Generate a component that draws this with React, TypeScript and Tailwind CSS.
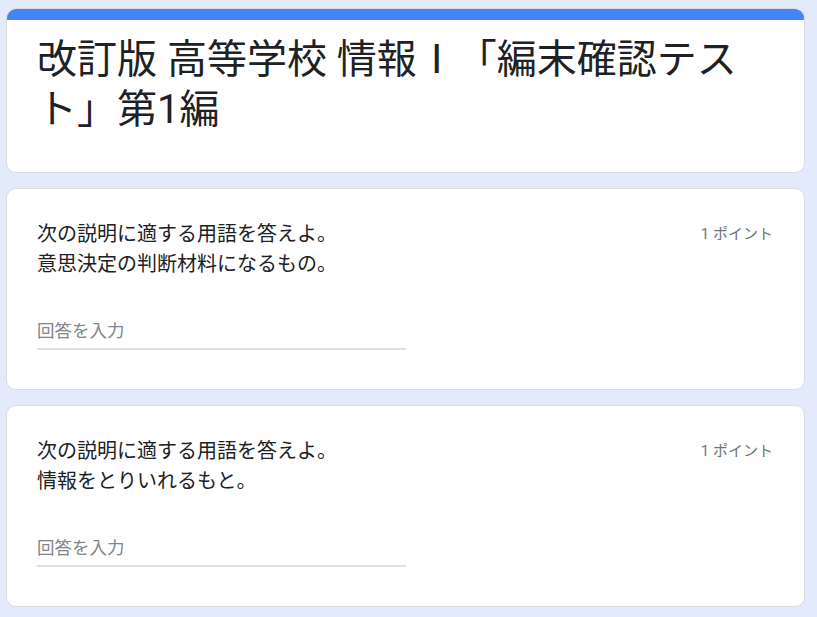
const font = { fontFamily: '"Roboto", "Noto Sans CJK JP", sans-serif' };

type Question = {
  prompt: string;
  detail: string;
  points: number;
};

const questions: Question[] = [
  { prompt: "次の説明に適する用語を答えよ。", detail: "意思決定の判断材料になるもの。", points: 1 },
  { prompt: "次の説明に適する用語を答えよ。", detail: "情報をとりいれるもと。", points: 1 },
];

const QuestionCard: React.FC<{ question: Question }> = ({ question }) => {
  return (
    <div className="rounded-[10px] border border-[#dadce0] bg-white pt-[30px] pb-[39px] pl-[30px] pr-[31px]">
      <div className="flex items-start justify-between">
        <div className="text-[20px] leading-[30px] text-[#202124]">
          <div>{question.prompt}</div>
          <div>{question.detail}</div>
        </div>
        <div className="text-[15px] leading-[30px] text-[#70757a]">
          {question.points} ポイント
        </div>
      </div>
      {/* answer input */}
      <div className="mt-[39px] w-[369px]">
        <div className="pb-[4px] text-[17.5px] leading-[26px] text-[#80868b]">回答を入力</div>
        <div className="h-[2px] bg-[#e0e0e0]" />
      </div>
    </div>
  );
};

export default function App() {
  return (
    <div className="min-h-[617px] bg-[#e2eafc] pt-[8px] pl-[6px]" style={font}>
      <div className="flex w-[799px] flex-col gap-[15px]">
        <div className="overflow-hidden rounded-[10px] border border-[#dadce0] bg-white">
          <div className="h-[11px] bg-[#4285f4]" />
          <div className="pt-[15px] pb-[37px] pl-[30px] pr-[30px]">
            <h1 className="text-[40px] font-normal leading-[50px] text-[#202124]">
              改訂版 高等学校 情報Ⅰ「編末確認テスト」第1編
            </h1>
          </div>
        </div>
        {questions.map((q, i) => (
          <QuestionCard key={i} question={q} />
        ))}
      </div>
    </div>
  );
}
